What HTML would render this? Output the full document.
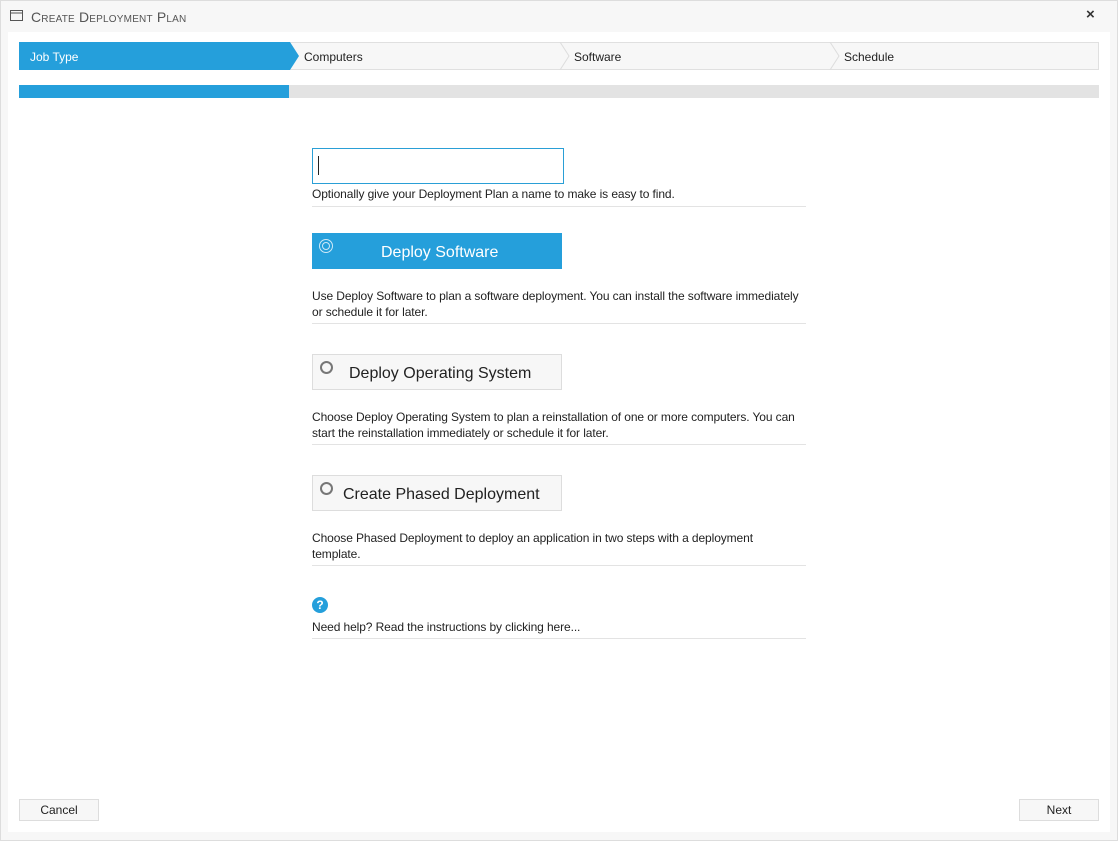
<!DOCTYPE html>
<html><head><meta charset="utf-8"><style>
*{margin:0;padding:0;box-sizing:border-box}
body{width:1118px;height:841px;background:#f7f7f7;font-family:"Liberation Sans",sans-serif;position:relative;overflow:hidden}
.a{position:absolute}
.title{left:31px;top:9px;font-size:14px;color:#555;font-variant:small-caps;letter-spacing:0.2px}
.win{position:absolute;left:8px;top:32px;width:1102px;height:800px;background:#fff}
.step{position:absolute;top:43px;height:28px;font-size:12px;line-height:28px;color:#222}
.t{font-size:12px;color:#222;line-height:16px;white-space:nowrap;letter-spacing:-0.1px}
.hr{position:absolute;left:312px;width:494px;height:1px;background:#e3e3e3}
.btn{position:absolute;left:312px;width:250px;height:36px;background:#f7f7f7;border:1px solid #ddd;font-size:16px;color:#222}
.rad{position:absolute;left:7px;top:6px;width:13px;height:13px;border:2px solid #777;border-radius:50%}
.fb{position:absolute;top:799px;width:80px;height:22px;border:1px solid #ddd;background:#f7f7f7;font-size:12px;line-height:21px;text-align:center;color:#222}
</style></head><body>
<div class="a" style="left:0;top:0;width:1118px;height:841px;border:1px solid #ddd"></div>
<svg class="a" style="left:10px;top:10px" width="13" height="11"><rect x="0.5" y="0.5" width="12" height="10" fill="none" stroke="#555"/><line x1="0" y1="3" x2="13" y2="3" stroke="#555"/></svg>
<div class="a title">Create Deployment Plan</div>
<div class="a" style="left:1086px;top:6px;font-size:15px;color:#333;font-weight:bold">×</div>
<div class="win"></div>
<svg class="a" style="left:19px;top:42px" width="1080" height="28">
<rect x="0" y="0.5" width="1079.5" height="27" fill="#f7f7f7" stroke="#e0e0e0"/>
<polyline points="541,0 550,14 541,28" fill="none" stroke="#ddd"/>
<polyline points="811,0 820,14 811,28" fill="none" stroke="#ddd"/>
<polygon points="0,0 271,0 280,14 271,28 0,28" fill="#259fdb"/>
</svg>
<div class="step" style="left:30px;color:#fff">Job Type</div>
<div class="step" style="left:304px">Computers</div>
<div class="step" style="left:574px">Software</div>
<div class="step" style="left:844px">Schedule</div>
<div class="a" style="left:19px;top:85px;width:1080px;height:13px;background:#e3e3e3"></div>
<div class="a" style="left:19px;top:85px;width:270px;height:13px;background:#259fdb"></div>
<div class="a" style="left:312px;top:148px;width:252px;height:36px;border:1px solid #2a9fd6"></div>
<div class="a" style="left:318px;top:156px;width:1px;height:19px;background:#222"></div>
<div class="a t" style="left:312px;top:186px">Optionally give your Deployment Plan a name to make is easy to find.</div>
<div class="hr" style="top:206px"></div>
<div class="btn" style="top:233px;background:#259fdb;border-color:#259fdb;color:#fff"><div class="rad" style="border-color:#cfe9f7;left:6px;top:5px;width:14px;height:14px;border-width:1px"><div style="margin:2px;width:8px;height:8px;border:1px solid #cfe9f7;border-radius:50%"></div></div><span class="a" style="left:68px;top:10px">Deploy Software</span></div>
<div class="a t" style="left:312px;top:288px">Use Deploy Software to plan a software deployment. You can install the software immediately<br>or schedule it for later.</div>
<div class="hr" style="top:323px"></div>
<div class="btn" style="top:354px"><div class="rad"></div><span class="a" style="left:36px;top:10px">Deploy Operating System</span></div>
<div class="a t" style="left:312px;top:409px">Choose Deploy Operating System to plan a reinstallation of one or more computers. You can<br>start the reinstallation immediately or schedule it for later.</div>
<div class="hr" style="top:444px"></div>
<div class="btn" style="top:475px"><div class="rad"></div><span class="a" style="left:30px;top:10px">Create Phased Deployment</span></div>
<div class="a t" style="left:312px;top:530px">Choose Phased Deployment to deploy an application in two steps with a deployment<br>template.</div>
<div class="hr" style="top:565px"></div>
<div class="a" style="left:312px;top:597px;width:16px;height:16px;border-radius:50%;background:#259fdb;color:#fff;font-size:12px;font-weight:bold;text-align:center;line-height:16px">?</div>
<div class="a t" style="left:312px;top:619px">Need help? Read the instructions by clicking here...</div>
<div class="hr" style="top:638px"></div>
<div class="fb" style="left:19px">Cancel</div>
<div class="fb" style="left:1019px">Next</div>
</body></html>
